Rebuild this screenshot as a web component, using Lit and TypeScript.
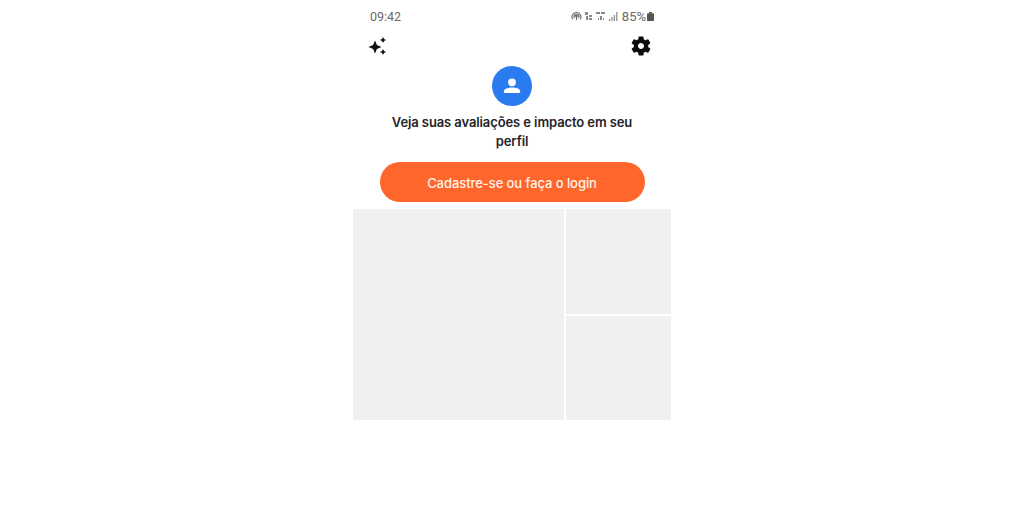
import { LitElement, html, css } from "lit";
import { customElement } from "lit/decorators.js";

@customElement("app-root")
export class AppRoot extends LitElement {
  static styles = css`
    :host { display: block; width: 1024px; height: 512px; background: #fff; overflow: hidden; font-family: Inter, "Noto Sans", sans-serif; }
    .phone { width: 318px; margin-left: 353px; display: flex; flex-direction: column; }
    .status { height: 32px; display: flex; align-items: center; justify-content: space-between; padding: 0 17px 0 17px; color: #6a6a6a; font-family: Roboto, sans-serif; font-size: 13px; box-sizing: border-box; }
    .time { font-size: 12.5px; }
    .status-right { display: flex; align-items: center; gap: 3px; }
    .status-right svg { display: block; }
    .pct { font-size: 13px; letter-spacing: 0; }
    .toolbar { height: 28px; display: flex; align-items: center; justify-content: space-between; padding: 0 18px 0 14px; }
    .toolbar svg { display: block; }
    .avatar { width: 40px; height: 40px; border-radius: 50%; background: #2b7bf0; align-self: center; margin-top: 6px; display: flex; align-items: center; justify-content: center; }
    .title { margin: 7px auto 0; width: 262px; text-align: center; font-size: 13px; font-weight: 600; letter-spacing: -0.1px; line-height: 19px; color: #1f2328; }
    .cta { align-self: center; margin-top: 11px; width: 265px; height: 40px; border: 0; border-radius: 20px; background: #ff662b; color: #fff4ec; font-family: inherit; font-size: 13px; font-weight: 500; letter-spacing: -0.07px; padding: 2px 0 0; }
    .grid { margin-top: 7px; height: 211px; display: grid; grid-template-columns: 211px 105px; grid-template-rows: 105px 104px; gap: 2px; }
    .tile { background: #f0f0f0; }
    .big { grid-row: 1 / 3; }
  `;

  render() {
    return html`
      <div class="phone">
        <div class="status">
          <span class="time">09:42</span>
          <div class="status-right">
            <svg width="11" height="10" viewBox="0 0 11 10" fill="none" stroke="#666" stroke-width="1.1"><path d="M2 8.5A4.4 4.4 0 1 1 9 8.5"/><path d="M3.6 7A2.4 2.4 0 1 1 7.4 7"/><circle cx="5.5" cy="5" r="0.8" fill="#666"/><path d="M5.5 6v3"/></svg>
            <svg width="8" height="8" viewBox="0 0 8 8" fill="#888"><rect x="0" y="0" width="3" height="3"/><rect x="1" y="4" width="2" height="4"/><rect x="4" y="3" width="3" height="2"/><rect x="4" y="6" width="3" height="2"/></svg>
            <svg width="10" height="10" viewBox="0 0 10 10" fill="#888"><rect x="0" y="1" width="4" height="2"/><rect x="5" y="1" width="4" height="2"/><rect x="4" y="5" width="2" height="4"/><rect x="2" y="7" width="1" height="2"/><rect x="7" y="7" width="1" height="2"/></svg>
            <svg width="10" height="9" viewBox="0 0 10 9" fill="#888"><rect x="0" y="7" width="1.2" height="2"/><rect x="2.4" y="5" width="1.2" height="4"/><rect x="4.8" y="3" width="1.2" height="6"/><rect x="7.2" y="0" width="1.2" height="9"/></svg>
            <span class="pct">85%</span>
            <svg style="margin-left:-2px" width="7" height="9" viewBox="0 0 7 9" fill="#555"><rect x="0" y="1.2" width="7" height="7.8" rx="0.8"/><rect x="2" y="0" width="3" height="1.4"/></svg>
          </div>
        </div>
        <div class="toolbar">
          <svg width="20" height="18" viewBox="0 0 20 18" fill="#111">
            <path d="M8 3.5 9.9 8.1 14.5 10 9.9 11.9 8 16.5 6.1 11.9 1.5 10 6.1 8.1Z"/>
            <path d="M16 0 17 2 19 3 17 4 16 6 15 4 13 3 15 2Z"/>
            <path d="M16 12 17 14 19 15 17 16 16 18 15 16 13 15 15 14Z"/>
          </svg>
          <svg width="24" height="24" viewBox="0 0 24 24" fill="#0c0c0c" fill-rule="evenodd"><path d="M19.14 12.94c.04-.3.06-.61.06-.94 0-.32-.02-.64-.07-.94l2.03-1.58a.49.49 0 0 0 .12-.61l-1.92-3.32a.488.488 0 0 0-.59-.22l-2.39.96c-.5-.38-1.03-.7-1.62-.94l-.36-2.54a.484.484 0 0 0-.48-.41h-3.84c-.24 0-.43.17-.47.41l-.36 2.54c-.59.24-1.13.57-1.62.94l-2.39-.96c-.22-.08-.47 0-.59.22L2.74 8.87c-.12.21-.08.47.12.61l2.03 1.58c-.05.3-.09.63-.09.94s.02.64.07.94l-2.03 1.58a.49.49 0 0 0-.12.61l1.92 3.32c.12.22.37.29.59.22l2.39-.96c.5.38 1.03.7 1.62.94l.36 2.54c.05.24.24.41.48.41h3.84c.24 0 .44-.17.47-.41l.36-2.54c.59-.24 1.13-.56 1.62-.94l2.39.96c.22.08.47 0 .59-.22l1.92-3.32c.12-.22.07-.47-.12-.61l-2.01-1.58zM12 15c-1.65 0-3-1.35-3-3s1.35-3 3-3 3 1.35 3 3-1.35 3-3 3z"/></svg>
        </div>
        <div class="avatar">
          <svg width="20" height="20" viewBox="0 0 20 20" fill="#fff"><circle cx="10" cy="6.3" r="3.9"/><path d="M1.8 15.5C1.8 12.6 6.2 11.6 10 11.6S18.2 12.6 18.2 15.5C18.2 16.6 17.7 17 16.7 17H3.3C2.3 17 1.8 16.6 1.8 15.5Z"/></svg>
        </div>
        <div class="title">Veja suas avaliações e impacto em seu perfil</div>
        <button class="cta">Cadastre-se ou faça o login</button>
        <div class="grid">
          <div class="tile big"></div>
          <div class="tile"></div>
          <div class="tile"></div>
        </div>
      </div>
    `;
  }
}
